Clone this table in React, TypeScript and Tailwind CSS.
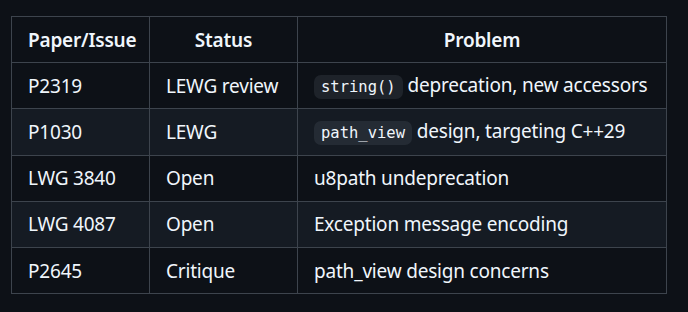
import React from 'react';

type Cell = { code?: string; text: string };

const rows: { id: string; status: string; problem: Cell }[] = [
  { id: 'P2319', status: 'LEWG review', problem: { code: 'string()', text: 'deprecation, new accessors' } },
  { id: 'P1030', status: 'LEWG', problem: { code: 'path_view', text: 'design, targeting C++29' } },
  { id: 'LWG 3840', status: 'Open', problem: { text: 'u8path undeprecation' } },
  { id: 'LWG 4087', status: 'Open', problem: { text: 'Exception message encoding' } },
  { id: 'P2645', status: 'Critique', problem: { text: 'path_view design concerns' } },
];

const font = { fontFamily: '"Noto Sans", "Open Sans", sans-serif' };

export default function App() {
  return (
    <div className="w-[688px] h-[312px] bg-[#0d1117] text-[#f0f6fc] pt-[16px] pl-[11px]" style={font}>
      <table className="table-fixed border-collapse w-[655px] text-[19px] leading-[28px] tracking-[-0.2px]">
        <colgroup>
          <col className="w-[138px]" />
          <col className="w-[148px]" />
          <col className="w-[369px]" />
        </colgroup>
        <thead>
          <tr className="h-[46px]">
            {['Paper/Issue', 'Status', 'Problem'].map(h => (
              <th key={h} className="border border-[#3d444d] px-[16px] py-0 font-semibold text-center whitespace-nowrap">
                {h}
              </th>
            ))}
          </tr>
        </thead>
        <tbody>
          {rows.map((r, i) => (
            <tr key={r.id} className={`h-[46.25px] ${i % 2 === 1 ? 'bg-[#151b23]' : 'bg-[#0d1117]'}`}>
              <td className="border border-[#3d444d] px-[16px] py-0 whitespace-nowrap">{r.id}</td>
              <td className="border border-[#3d444d] px-[16px] py-0 whitespace-nowrap">{r.status}</td>
              <td className="border border-[#3d444d] px-[16px] py-0 whitespace-nowrap">
                {r.problem.code && (
                  <>
                    <code
                      className="bg-[#656c7633] rounded-[7px] px-[7px] py-[3px] text-[15.5px] tracking-normal"
                      style={{ fontFamily: '"DejaVu Sans Mono", "Liberation Mono", monospace' }}
                    >
                      {r.problem.code}
                    </code>{' '}
                  </>
                )}
                {r.problem.text}
              </td>
            </tr>
          ))}
        </tbody>
      </table>
    </div>
  );
}
